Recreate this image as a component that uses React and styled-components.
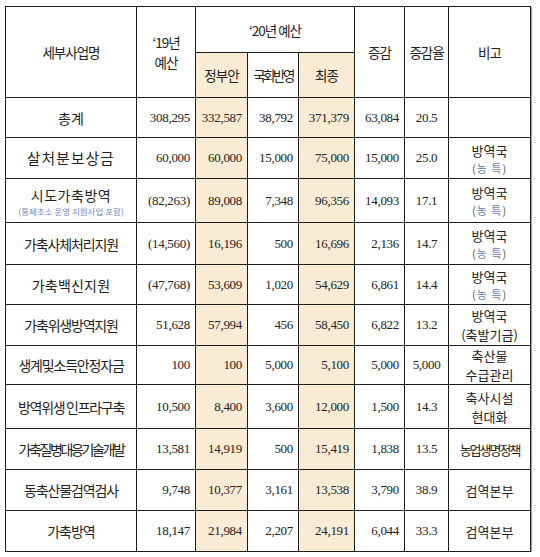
import React from 'react';
import styled, {createGlobalStyle} from 'styled-components';

const GlobalStyle = createGlobalStyle`
  body {
    margin: 0;
    background: #fff;
    font-family: "Liberation Serif", "Noto Sans CJK KR", serif;
    color: #222;
  }
`;

const Page = styled.div`
  padding: 6px 0 0 5px;
`;

const Table = styled.table`
  border-collapse: collapse;
  table-layout: fixed;
  width: 526px;
  box-shadow: 1px 1px 1px rgba(0, 0, 0, 0.35);
  border: 1.5px solid #1d1d1d;
`;

const Head = styled.th`
  border: 1px solid #1d1d1d;
  font-family: "Noto Sans CJK KR", sans-serif;
  font-weight: 400;
  font-size: 13.5px;
  letter-spacing: ${p => p.$ls || -1}px;
  line-height: 20px;
  height: ${p => p.$h || 44}px;
  padding: 0;
  text-align: center;
  vertical-align: middle;
  background: ${p => (p.$hl ? '#faecd4' : '#fff')};
`;

const Name = styled.td`
  border: 1px solid #1d1d1d;
  font-family: "Noto Sans CJK KR", sans-serif;
  font-size: ${p => p.$fs || 14}px;
  letter-spacing: ${p => p.$ls}px;
  white-space: nowrap;
  text-align: center;
  padding: 0;
  line-height: 20px;
`;

const SubNote = styled.div`
  font-size: 8.5px;
  letter-spacing: 0;
  line-height: 12px;
  color: #7486c0;
`;

const Num = styled.td`
  border: 1px solid #1d1d1d;
  font-size: 13px;
  letter-spacing: -0.3px;
  text-align: ${p => (p.$center ? 'center' : 'right')};
  padding: 0 5px 0 0;
  padding-left: ${p => (p.$center ? '5px' : '0')};
  background: ${p => (p.$hl ? '#faecd4' : '#fff')};
  white-space: nowrap;
`;

const Note = styled.td`
  border: 1px solid #1d1d1d;
  font-family: "Noto Sans CJK KR", sans-serif;
  font-size: 13px;
  letter-spacing: ${p => p.$ls || 0}px;
  line-height: 19px;
  text-align: center;
  padding: 0;
  white-space: nowrap;
`;

const Fund = styled.div`
  font-size: 11px;
  line-height: 16px;
  color: #555;
  letter-spacing: 1px;
  span {
    color: #6d80b4;
  }
`;

const Row = styled.tr`
  height: ${p => p.$h}px;
`;

const widths = [131, 59, 52, 51, 56, 50, 44, 82];

const rows = [
  {name: '총계', ls: 0, h: 40, v: ['308,295', '332,587', '38,792', '371,379', '63,084', '20.5'], note: null},
  {name: '살처분보상금', ls: 1.3, fs: 14.5, h: 41, v: ['60,000', '60,000', '15,000', '75,000', '15,000', '25.0'], note: ['방역국', 'fund']},
  {name: '시도가축방역', sub: '(통제초소 운영 지원사업 포함)', ls: 0.5, h: 44, v: ['(82,263)', '89,008', '7,348', '96,356', '14,093', '17.1'], note: ['방역국', 'fund']},
  {name: '가축사체처리지원', ls: -1.1, h: 42, v: ['(14,560)', '16,196', '500', '16,696', '2,136', '14.7'], note: ['방역국', 'fund']},
  {name: '가축백신지원', ls: 0.2, h: 40, v: ['(47,768)', '53,609', '1,020', '54,629', '6,861', '14.4'], note: ['방역국', 'fund']},
  {name: '가축위생방역지원', ls: -1.2, h: 41, v: ['51,628', '57,994', '456', '58,450', '6,822', '13.2'], note: ['방역국', '(축발기금)']},
  {name: '생계및소득안정자금', ls: -1.2, h: 39, v: ['100', '100', '5,000', '5,100', '5,000', '5,000'], note: ['축산물', '수급관리']},
  {name: '방역위생 인프라구축', ls: -1.3, h: 44, v: ['10,500', '8,400', '3,600', '12,000', '1,500', '14.3'], note: ['축사시설', '현대화']},
  {name: '가축질병대응기술개발', ls: -2.4, h: 41, v: ['13,581', '14,919', '500', '15,419', '1,838', '13.5'], note: ['농업생명정책'], noteLs: -2},
  {name: '동축산물검역검사', ls: -1.1, h: 41, v: ['9,748', '10,377', '3,161', '13,538', '3,790', '38.9'], note: ['검역본부']},
  {name: '가축방역', ls: -1, h: 41, v: ['18,147', '21,984', '2,207', '24,191', '6,044', '33.3'], note: ['검역본부']}
];

function NoteCell({row}) {
  if (!row.note) return <Note />;
  return (
    <Note $ls={row.noteLs}>
      {row.note.map((line, i) =>
        line === 'fund' ? (
          <Fund key={i}>
            (<span>농 특</span>)
          </Fund>
        ) : (
          <div key={i}>{line}</div>
        )
      )}
    </Note>
  );
}

export default function App() {
  return (
    <Page>
      <GlobalStyle />
      <Table>
        <colgroup>
          {widths.map((w, i) => (
            <col key={i} style={{width: w}} />
          ))}
        </colgroup>
        <thead>
          <tr>
            <Head rowSpan={2}>세부사업명</Head>
            <Head rowSpan={2}>
              ‘19년
              <br />
              예산
            </Head>
            <Head colSpan={3} $h={45}>‘20년 예산</Head>
            <Head rowSpan={2}>증감</Head>
            <Head rowSpan={2}>증감율</Head>
            <Head rowSpan={2}>비고</Head>
          </tr>
          <tr>
            <Head $hl $h={44}>정부안</Head>
            <Head $h={44} $ls={-2.5}>국회반영</Head>
            <Head $hl $h={44}>최종</Head>
          </tr>
        </thead>
        <tbody>
          {rows.map(row => (
            <Row key={row.name} $h={row.h}>
              <Name $ls={row.ls} $fs={row.fs}>
                {row.name}
                {row.sub && <SubNote>{row.sub}</SubNote>}
              </Name>
              <Num>{row.v[0]}</Num>
              <Num $hl>{row.v[1]}</Num>
              <Num>{row.v[2]}</Num>
              <Num $hl>{row.v[3]}</Num>
              <Num>{row.v[4]}</Num>
              <Num $center>{row.v[5]}</Num>
              <NoteCell row={row} />
            </Row>
          ))}
        </tbody>
      </Table>
    </Page>
  );
}
